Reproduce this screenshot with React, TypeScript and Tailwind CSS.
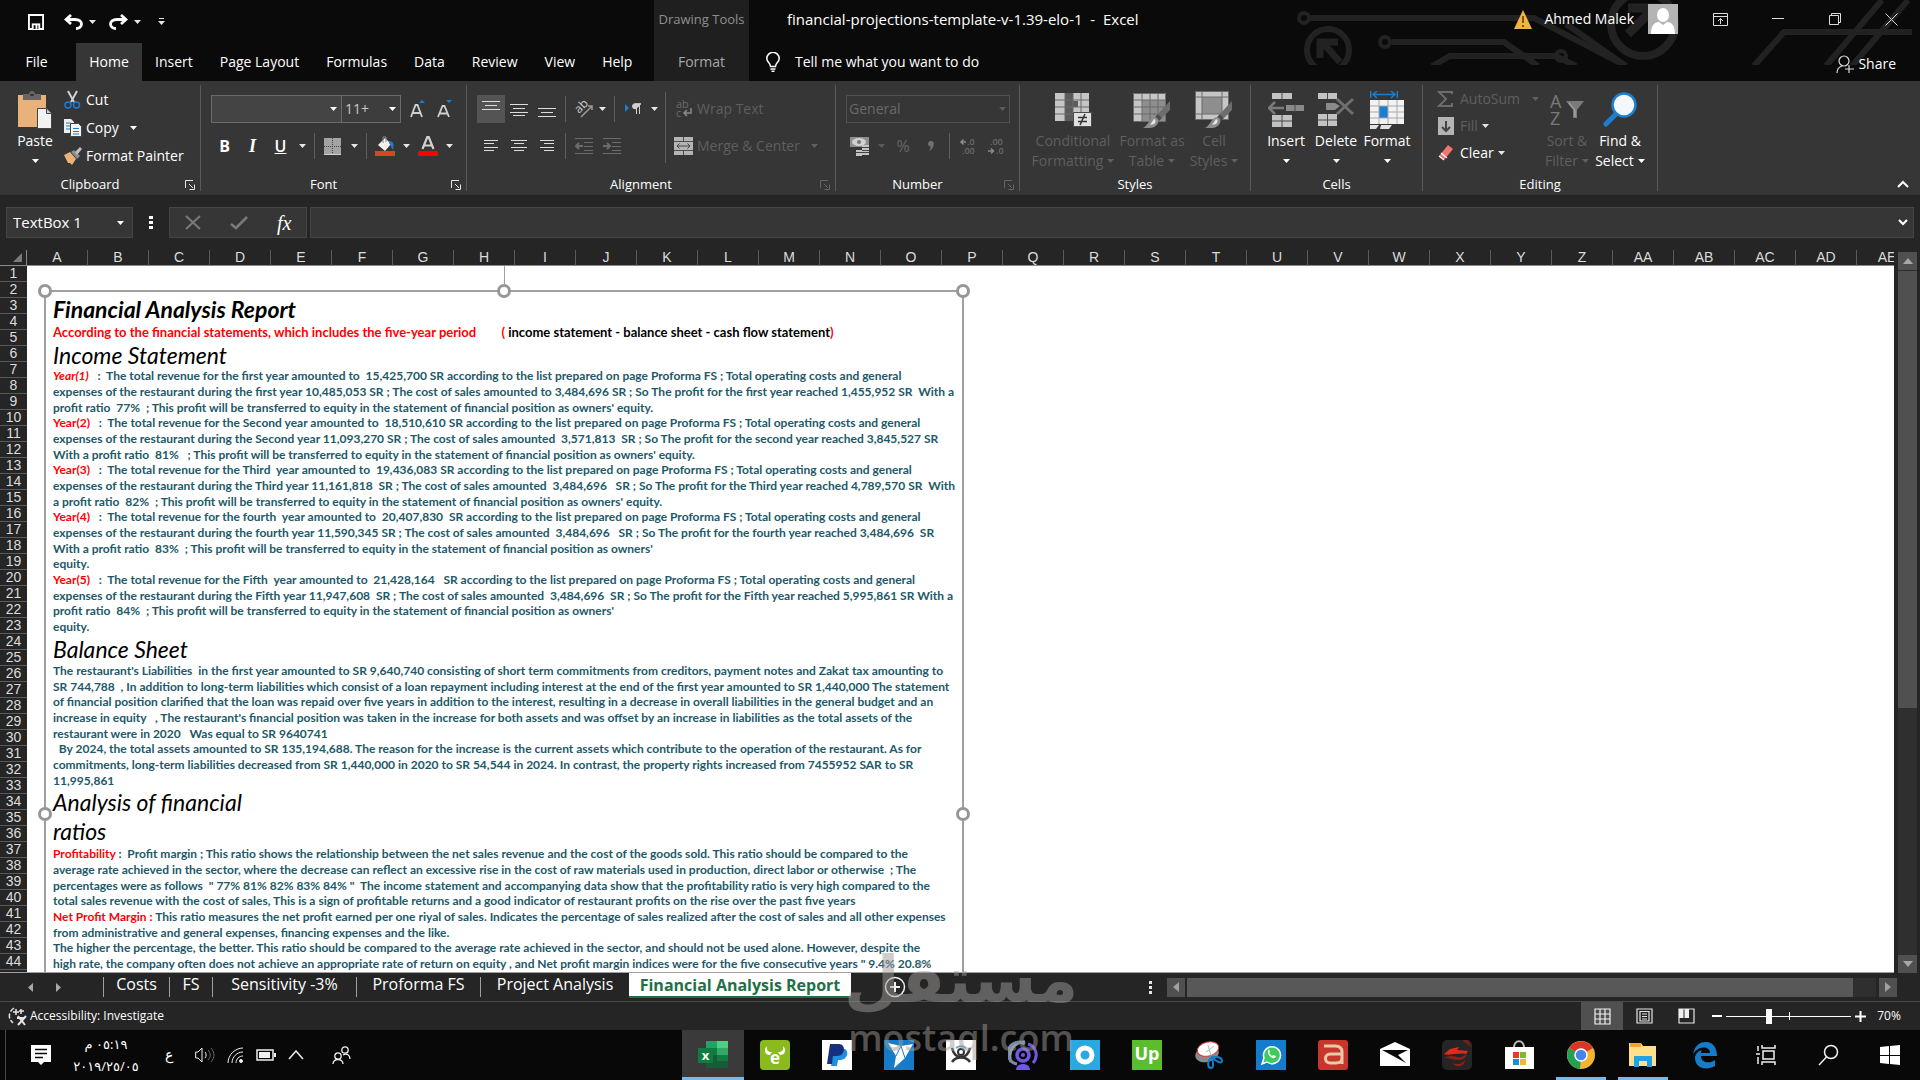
import type { ReactNode } from 'react';

const UI_FONT = 'font-["Open_Sans","DejaVu_Sans",sans-serif]';
const DOC_FONT = 'font-["Lato",sans-serif]';
const GRID_FONT = 'font-["Liberation_Sans",sans-serif]';

const COLUMNS = 'A B C D E F G H I J K L M N O P Q R S T U V W X Y Z AA AB AC AD AE'.split(' ');
const ROWS = Array.from({ length: 45 }, (_, i) => i + 1);
const TABS = ['Insert', 'Page Layout', 'Formulas', 'Data', 'Review', 'View', 'Help'];

type Line = { lead?: string; italic?: boolean; text: string };

const INCOME: Line[] = [
  { lead: 'Year(1)', italic: true, text: '   :  The total revenue for the first year amounted to  15,425,700 SR according to the list prepared on page Proforma FS ; Total operating costs and general' },
  { text: 'expenses of the restaurant during the first year 10,485,053 SR ; The cost of sales amounted to 3,484,696 SR ; So The profit for the first year reached 1,455,952 SR  With a' },
  { text: "profit ratio  77%  ; This profit will be transferred to equity in the statement of financial position as owners' equity." },
  { lead: 'Year(2)', text: '   :  The total revenue for the Second year amounted to  18,510,610 SR according to the list prepared on page Proforma FS ; Total operating costs and general' },
  { text: 'expenses of the restaurant during the Second year 11,093,270 SR ; The cost of sales amounted  3,571,813  SR ; So The profit for the second year reached 3,845,527 SR' },
  { text: "With a profit ratio  81%   ; This profit will be transferred to equity in the statement of financial position as owners' equity." },
  { lead: 'Year(3)', text: '   :  The total revenue for the Third  year amounted to  19,436,083 SR according to the list prepared on page Proforma FS ; Total operating costs and general' },
  { text: 'expenses of the restaurant during the Third year 11,161,818  SR ; The cost of sales amounted  3,484,696   SR ; So The profit for the Third year reached 4,789,570 SR  With' },
  { text: "a profit ratio  82%  ; This profit will be transferred to equity in the statement of financial position as owners' equity." },
  { lead: 'Year(4)', text: '   :  The total revenue for the fourth  year amounted to  20,407,830  SR according to the list prepared on page Proforma FS ; Total operating costs and general' },
  { text: 'expenses of the restaurant during the fourth year 11,590,345 SR ; The cost of sales amounted  3,484,696   SR ; So The profit for the fourth year reached 3,484,696  SR' },
  { text: "With a profit ratio  83%  ; This profit will be transferred to equity in the statement of financial position as owners'" },
  { text: 'equity.' },
  { lead: 'Year(5)', text: '   :  The total revenue for the Fifth  year amounted to  21,428,164   SR according to the list prepared on page Proforma FS ; Total operating costs and general' },
  { text: 'expenses of the restaurant during the Fifth year 11,947,608  SR ; The cost of sales amounted  3,484,696  SR ; So The profit for the Fifth year reached 5,995,861 SR With a' },
  { text: "profit ratio  84%  ; This profit will be transferred to equity in the statement of financial position as owners'" },
  { text: 'equity.' },
];

const BALANCE: Line[] = [
  { text: "The restaurant's Liabilities  in the first year amounted to SR 9,640,740 consisting of short term commitments from creditors, payment notes and Zakat tax amounting to" },
  { text: 'SR 744,788  , In addition to long-term liabilities which consist of a loan repayment including interest at the end of the first year amounted to SR 1,440,000 The statement' },
  { text: 'of financial position clarified that the loan was repaid over five years in addition to the interest, resulting in a decrease in overall liabilities in the general budget and an' },
  { text: "increase in equity   , The restaurant's financial position was taken in the increase for both assets and was offset by an increase in liabilities as the total assets of the" },
  { text: 'restaurant were in 2020   Was equal to SR 9640741' },
  { text: '  By 2024, the total assets amounted to SR 135,194,688. The reason for the increase is the current assets which contribute to the operation of the restaurant. As for' },
  { text: 'commitments, long-term liabilities decreased from SR 1,440,000 in 2020 to SR 54,544 in 2024. In contrast, the property rights increased from 7455952 SAR to SR' },
  { text: '11,995,861' },
];

const RATIOS: Line[] = [
  { lead: 'Profitability', text: ' :  Profit margin ; This ratio shows the relationship between the net sales revenue and the cost of the goods sold. This ratio should be compared to the' },
  { text: 'average rate achieved in the sector, where the decrease can reflect an excessive rise in the cost of raw materials used in production, direct labor or otherwise  ; The' },
  { text: 'percentages were as follows  " 77% 81% 82% 83% 84% "  The income statement and accompanying data show that the profitability ratio is very high compared to the' },
  { text: 'total sales revenue with the cost of sales, This is a sign of profitable returns and a good indicator of restaurant profits on the rise over the past five years' },
  { lead: 'Net Profit Margin :', text: ' This ratio measures the net profit earned per one riyal of sales. Indicates the percentage of sales realized after the cost of sales and all other expenses' },
  { text: 'from administrative and general expenses, financing expenses and the like.' },
  { text: 'The higher the percentage, the better. This ratio should be compared to the average rate achieved in the sector, and should not be used alone. However, despite the' },
  { text: 'high rate, the company often does not achieve an appropriate rate of return on equity , and Net profit margin indices were for the five consecutive years " 9.4% 20.8%' },
];

/* ---------- small pieces ---------- */

function Caret({ className = 'text-[#e6e6e6]' }: { className?: string }) {
  return (
    <svg width="7" height="4" viewBox="0 0 7 4" className={`inline-block shrink-0 ${className}`} aria-hidden="true">
      <path d="M0 0h7L3.5 4z" fill="currentColor" />
    </svg>
  );
}

function Tool({ label, className, children }: { label: string; className: string; children: ReactNode }) {
  return (
    <button type="button" aria-label={label} className={`flex h-7 shrink-0 items-center justify-center ${className}`}>
      {children}
    </button>
  );
}

function Sep({ className }: { className: string }) {
  return <span className={`h-[26px] w-px shrink-0 bg-[#5e5e5e] ${className}`} />;
}

function Group({ title, className, launcher, children }: { title: string; className: string; launcher?: string; children: ReactNode }) {
  return (
    <section aria-label={title} className={`my-1 flex shrink-0 flex-col border-r border-[#5a5a5a] ${className}`}>
      <div className="flex h-[92px]">{children}</div>
      <div className={`relative flex h-[14px] items-center justify-center text-[13px] leading-[14px] ${launcher ? 'pr-5' : ''}`}>
        {title}
        {launcher && (
          <button type="button" aria-label={`${title} settings`} className={`absolute right-[5px] top-[3px] ${launcher}`}>
            <svg width="10" height="10" viewBox="0 0 10 10" fill="none" stroke="currentColor">
              <path d="M.5 8V.5H8M4 4l4 4M9.5 4.5v5h-5" />
            </svg>
          </button>
        )}
      </div>
    </section>
  );
}

function BigButton({ icon, first, second, className }: { icon: ReactNode; first: string; second?: string; className: string }) {
  return (
    <button type="button" className={`flex shrink-0 flex-col items-center pt-1 text-sm leading-5 ${className}`}>
      <span className="flex h-[42px] items-center">{icon}</span>
      <span className="whitespace-nowrap">{first}</span>
      <span className="flex h-5 items-center gap-1 whitespace-nowrap">
        {second}
        <Caret className="text-current" />
      </span>
    </button>
  );
}

function AlignIcon({ lines, className = 'text-[#dcdcdc]' }: { lines: [number, number, number][]; className?: string }) {
  return (
    <svg width="18" height="18" viewBox="0 0 18 18" stroke="currentColor" className={className}>
      {lines.map(([x, w, y]) => (
        <path key={y} d={`M${x} ${y + 0.5}h${w}`} />
      ))}
    </svg>
  );
}

function IndentIcon({ out }: { out?: boolean }) {
  return (
    <svg width="18" height="18" viewBox="0 0 18 18" fill="none" stroke="currentColor" className="text-[#6b6b6b]">
      <path d="M0 1.5h18M9 5.5h9M9 9.5h9M9 13.5h9M0 16.5h18" />
      <path d={out ? 'M8 9H1m3-3L1 9l3 3' : 'M0 9h7M4 6l3 3-3 3'} strokeWidth="2" />
    </svg>
  );
}

/* ---------- title and tabs ---------- */

function Circuit() {
  return (
    <svg width="624" height="65" viewBox="0 0 624 65" fill="none" stroke="#222" strokeWidth="6" className="absolute right-0 top-0" aria-hidden="true">
      <path d="M14 18h224l92 48" />
      <circle cx="8" cy="18" r="5" strokeWidth="4" />
      <path d="M96 42h112l34 24M136 66l18-10h106l20 10" />
      <circle cx="89" cy="42" r="5" strokeWidth="4" />
      <circle cx="265" cy="56" r="5" strokeWidth="4" />
      <circle cx="32" cy="50" r="21" />
      <path d="M24 58V42h18M26 42l18 20" strokeWidth="7" />
      <path d="M270 24l60 42" />
      <circle cx="347" cy="24" r="32" strokeWidth="8" />
      <path d="M332 34l26-26M332 8h28v26" strokeWidth="9" />
      <path d="M458 66l30-34h128M530 66l56-66M556 66l56-66" />
    </svg>
  );
}

function TitleBar() {
  return (
    <div className="relative flex h-[43px] items-center">
      <div className="flex w-[654px] shrink-0 items-center pl-[28px]">
        <button type="button" aria-label="Save">
          <svg width="16" height="16" viewBox="0 0 17 17">
            <path d="M1 1h15v15H1z" fill="none" stroke="#fff" strokeWidth="2" />
            <path d="M4 10h9v6H4z" fill="#fff" />
            <path d="M6 12h2v4H6zM10 12h1v4h-1z" fill="#0a0a0a" />
          </svg>
        </button>
        <button type="button" aria-label="Undo" className="ml-5 flex items-center gap-[6px]">
          <svg width="19" height="16" viewBox="0 0 19 16" fill="none" stroke="#fff" strokeWidth="2.8">
            <path d="M7 1L2 5.500l5 4.500M2.500 5.500H11c9 0 8 9 1 9" />
          </svg>
          <Caret />
        </button>
        <button type="button" aria-label="Redo" className="ml-[13px] flex items-center gap-[6px]">
          <svg width="19" height="16" viewBox="0 0 19 16" fill="none" stroke="#fff" strokeWidth="2.8">
            <path d="M12 1l5 4.500-5 4.500M16.500 5.500H8c-9 0-8 9-1 9" />
          </svg>
          <Caret />
        </button>
        <button type="button" aria-label="Customize Quick Access Toolbar" className="ml-[17px]">
          <svg width="7" height="7" viewBox="0 0 7 7" fill="#e6e6e6">
            <path d="M1 0h5v1H1zM0 3h7L3.500 7z" />
          </svg>
        </button>
      </div>
      <div className="flex h-full w-[95px] shrink-0 items-center justify-center bg-[#1f1f1f] pb-1 text-[13px] text-[#8f8f8f]">Drawing Tools</div>
      <h1 className="ml-[38px] whitespace-pre pb-1 text-[15px]">financial-projections-template-v-1.39-elo-1  -  Excel</h1>
      <div className="ml-auto flex h-full items-center pb-[5px]">
        <svg width="18" height="19" viewBox="0 0 18 19" className="mr-3">
          <path d="M9 0l9 19H0z" fill="#f0b440" />
          <path d="M8 6h2v7H8zM8 15h2v2H8z" fill="#7a5410" />
        </svg>
        <span className="text-sm">Ahmed Malek</span>
        <svg width="30" height="30" viewBox="0 0 30 30" className="ml-[14px] mr-[14px]">
          <path d="M0 0h30v30H0z" fill="#b4b4b4" />
          <path d="M3 30c0-8 3-12 8-12l4 3 4-3c5 0 8 4 8 12z" fill="#fff" />
          <ellipse cx="15" cy="11" rx="6" ry="7" fill="#fff" />
        </svg>
        <button type="button" aria-label="Ribbon Display Options" className="flex w-[57px] justify-center">
          <svg width="15" height="13" viewBox="0 0 15 13" fill="none" stroke="#dcdcdc">
            <path d="M.5.5h14v12H.5zM.5 3.500h14M7.500 11V5.500M5 8l2.500-2.500L10 8" />
          </svg>
        </button>
        <button type="button" aria-label="Minimize" className="flex w-[57px] justify-center">
          <svg width="12" height="12" viewBox="0 0 12 12" stroke="#dcdcdc">
            <path d="M0 5.500h12" />
          </svg>
        </button>
        <button type="button" aria-label="Restore Down" className="flex w-[57px] justify-center">
          <svg width="12" height="12" viewBox="0 0 12 12" fill="none" stroke="#dcdcdc">
            <path d="M.5 2.500h9v9h-9zM2.500 2V.5h9v9H10" />
          </svg>
        </button>
        <button type="button" aria-label="Close" className="flex w-[57px] justify-center">
          <svg width="13" height="13" viewBox="0 0 13 13" stroke="#dcdcdc">
            <path d="M.5.5l12 12M12.500.5l-12 12" />
          </svg>
        </button>
      </div>
    </div>
  );
}

function RibbonTabs() {
  return (
    <nav className="relative flex h-[38px] text-sm">
      <button type="button" className="w-[76px] pr-[3px]">File</button>
      <button type="button" className="w-[66px] bg-[#363636]">Home</button>
      <div className="flex w-[512px] gap-px">
        {TABS.map(tab => (
          <button key={tab} type="button" className="whitespace-nowrap px-[13px]">{tab}</button>
        ))}
      </div>
      <button type="button" className="w-[95px] bg-[#1f1f1f] text-[#a8a8a8]">Format</button>
      <button type="button" className="ml-[17px] flex items-center gap-[15px]">
        <svg width="14" height="20" viewBox="0 0 14 20" fill="none" stroke="#fff" strokeWidth="1.500">
          <path d="M4.500 14.500c0-4-3.700-4-3.700-8a6.200 6.200 0 0112.400 0c0 4-3.700 4-3.700 8zM4.500 17h5M5.500 19.200h3" />
        </svg>
        Tell me what you want to do
      </button>
      <button type="button" className="ml-auto mr-6 flex items-center gap-1 pt-1">
        <svg width="18" height="19" viewBox="0 0 18 19" fill="none" stroke="#dcdcdc" strokeWidth="1.200">
          <circle cx="8" cy="6" r="5" />
          <path d="M1 18c0-4 2-6 5-7M13 10v8M9 14h9" />
        </svg>
        Share
      </button>
    </nav>
  );
}

/* ---------- ribbon ---------- */

const PasteIcon = (
  <svg width="34" height="38" viewBox="0 0 34 38">
    <path d="M0 4h28v32H0z" fill="#e8b27a" />
    <path d="M5 3h6c0-4 6-4 6 0h6v6H5z" fill="#666" />
    <path d="M12 3h4v2h-4z" fill="#363636" />
    <path d="M19.500 17.500h9l5 5v15h-14z" fill="#f2f2f2" stroke="#444" />
    <path d="M28.500 17.500v5h5" fill="#ccc" stroke="#444" />
  </svg>
);

const ConditionalIcon = (
  <svg width="37" height="34" viewBox="0 0 37 34">
    <path d="M0 0h34v28H0z" fill="#c6c6c6" />
    <path d="M10 0h8v28h-8zM18 8h5v6h-5z" fill="#5b5b5b" />
    <path d="M0 7h34M0 14h34M0 21h34M10 0v28M18 0v28M26 0v28" stroke="#6b6b6b" />
    <path d="M18.500 19.500h18v14h-18z" fill="#e0e0e0" stroke="#4a4a4a" />
    <path d="M23 24.500h9M23 28.500h9M30 21l-5 11" stroke="#333" strokeWidth="1.500" />
  </svg>
);

function Brush() {
  return (
    <>
      <path d="M37 8v9l-8 8-4-4z" fill="#6d6d6d" />
      <path d="M25 21l4 4-3 3-4-4z" fill="#4c4c4c" />
      <path d="M22 24c3 1 4 3 3 6-3 6-9 5-15 5 5-2 6-10 12-11z" fill="#8d8d8d" />
      <path d="M21 26c2 0 2 3 0 5l-4 1z" fill="#e6e6e6" />
    </>
  );
}

const TableIcon = (
  <svg width="38" height="35" viewBox="0 0 38 35">
    <path d="M0 0h33v28H0z" fill="#c6c6c6" />
    <path d="M9 7h24v21H9z" fill="#8e8e8e" />
    <path d="M0 7h33M0 14h33M0 21h33M9 0v28M17 0v28M25 0v28M.5.5h32v28H.5z" stroke="#6b6b6b" fill="none" />
    <Brush />
  </svg>
);

const CellStylesIcon = (
  <svg width="38" height="38" viewBox="0 0 38 38">
    <path d="M.5.500h33v28H.5z" fill="#c6c6c6" stroke="#6b6b6b" />
    <path d="M7 6h20v17H7z" fill="#8e8e8e" />
    <path d="M0 6h34M0 23h34M7 0v29M27 0v29" stroke="#6b6b6b" />
    <g transform="translate(0 2)"><Brush /></g>
  </svg>
);

const InsertIcon = (
  <svg width="36" height="36" viewBox="0 0 36 36">
    <path d="M4 1h20v6H4zM4 23h20v12H4z" fill="#c2c2c2" />
    <path d="M18 13h18v6H18z" fill="#8a8a8a" />
    <path d="M14 0v7M27 12v8M14 23v12M4 29h20" stroke="#484848" />
    <path d="M16 16H2M7 10l-6 6 6 6" stroke="#7b7b7b" strokeWidth="2.500" fill="none" />
  </svg>
);

const DeleteIcon = (
  <svg width="36" height="36" viewBox="0 0 36 36">
    <path d="M0 1h19v6H0zM0 22h19v12H0z" fill="#c2c2c2" />
    <path d="M8 11h9l5 3-5 4H8z" fill="#8a8a8a" />
    <path d="M9.500 1v6M9.500 22v12M0 28h19" stroke="#484848" />
    <path d="M19 7l16 15M35 7L19 22" stroke="#6f6f6f" strokeWidth="3" />
  </svg>
);

const FormatIcon = (
  <svg width="34" height="38" viewBox="0 0 34 38">
    <path d="M.7 0v7M27.300 0v7M3 3.500h22M7 0L3 3.500 7 7M21 0l4 3.500L21 7" stroke="#1b7fd1" strokeWidth="1.500" fill="none" />
    <path d="M0 9h34v24H0z" fill="#f2f2f2" />
    <path d="M9 15h9v12H9z" fill="#1b7fd1" />
    <path d="M0 15h34M0 21h9M18 21h16M0 27h34M9 9v24M18 9v24M27 9v24" stroke="#a9a9a9" />
    <path d="M0 34h9l-3 4H0zM11 34h11l-3 4h-9z" fill="#e2e2e2" />
  </svg>
);

const SortIcon = (
  <svg width="34" height="34" viewBox="0 0 34 34" className="overflow-visible">
    <text x="0" y="15" fontSize="18" fill="#7a7a7a">A</text>
    <text x="0" y="32" fontSize="18" fill="#7a7a7a">Z</text>
    <path d="M16 8h18l-7 9v8h-4v-8z" fill="#7a7a7a" />
    <path d="M19 10l6 7v7" stroke="#b5b5b5" fill="none" />
  </svg>
);

const FindIcon = (
  <svg width="35" height="36" viewBox="0 0 35 36">
    <path d="M12 23L3 32" stroke="#1b7fd1" strokeWidth="5" strokeLinecap="round" />
    <circle cx="21" cy="13" r="11.500" fill="#f4f8fb" stroke="#1b7fd1" strokeWidth="2.500" />
  </svg>
);

function Ribbon() {
  return (
    <div className="relative flex bg-[#363636]">
      <Group title="Clipboard" className="w-[201px]" launcher="text-[#e6e6e6]">
        <BigButton icon={PasteIcon} first="Paste" className="ml-[10px] w-[50px]" />
        <div className="ml-[3px] flex flex-col pt-px text-sm">
          <button type="button" className="flex h-7 items-center gap-[3px]">
            <svg width="20" height="20" viewBox="0 0 20 20" fill="none">
              <path d="M5 1l6 11M14 1L8 12" stroke="#cfcfcf" strokeWidth="2" />
              <circle cx="5" cy="15" r="3" stroke="#1b7fd1" strokeWidth="1.500" />
              <circle cx="13.500" cy="15" r="3" stroke="#1b7fd1" strokeWidth="1.500" />
            </svg>
            Cut
          </button>
          <button type="button" className="flex h-7 items-center gap-[3px]">
            <svg width="20" height="20" viewBox="0 0 20 20">
              <path d="M1 1h7l3 3v11H1z" fill="#eee" />
              <path d="M3 5h5M3 8h6M3 11h4" stroke="#1b7fd1" />
              <path d="M7.500 5.500h8l3 3v10h-11z" fill="#f4f4f4" stroke="#444" />
              <path d="M10 10.500h6M10 13.500h6M10 16h6" stroke="#1b7fd1" />
            </svg>
            Copy
            <Caret className="ml-2" />
          </button>
          <button type="button" className="flex h-7 items-center gap-[3px] whitespace-nowrap">
            <svg width="20" height="18" viewBox="0 0 20 18">
              <path d="M1 8l6-3 6 7-4 6-2-2-2 0z" fill="#e8b27a" />
              <path d="M8 5l3-2 6 6-3 3z" fill="#8d8d8d" />
              <path d="M12 5l5-5 2 2-5 6z" fill="#bdbdbd" />
            </svg>
            Format Painter
          </button>
        </div>
      </Group>

      <Group title="Font" className="w-[266px]" launcher="text-[#e6e6e6]">
        <div className="flex flex-col gap-[9px] pl-[10px] pt-[10px]">
          <div className="flex items-center">
            <div className="relative">
              <select aria-label="Font name" className="h-7 w-[131px] appearance-none border border-[#6a6a6a] bg-[#444] px-1 text-sm">
                <option> </option>
              </select>
              <Caret className="absolute right-[5px] top-3" />
            </div>
            <div className="relative">
              <select aria-label="Font size" defaultValue="11+" className="h-7 w-[59px] appearance-none border border-l-0 border-[#6a6a6a] bg-[#3d3d3d] px-[3px] text-sm text-[#c8c8c8]">
                <option>11+</option>
              </select>
              <Caret className="absolute right-[5px] top-3" />
            </div>
            <Tool label="Increase Font Size" className="ml-[2px] w-[30px]">
              <svg width="16" height="18" viewBox="0 0 16 18">
                <path d="M1 17L5.500 5h2L12 17M3 13h7" fill="none" stroke="#cfcfcf" strokeWidth="1.800" />
                <path d="M9 3l3-3 3 3z" fill="#1b7fd1" />
              </svg>
            </Tool>
            <Tool label="Decrease Font Size" className="w-6">
              <svg width="16" height="18" viewBox="0 0 16 18">
                <path d="M1 17L5.500 6h2L12 17M3 13.500h7" fill="none" stroke="#cfcfcf" strokeWidth="1.800" />
                <path d="M9 0h6l-3 3z" fill="#1b7fd1" />
              </svg>
            </Tool>
          </div>
          <div className="flex h-7 items-center">
            <Tool label="Bold" className="w-[27px] text-base font-bold">B</Tool>
            <Tool label="Italic" className="w-[29px] font-['Liberation_Serif',serif] text-lg font-bold italic">I</Tool>
            <Tool label="Underline" className="w-[27px] text-base font-semibold underline">U</Tool>
            <Tool label="Underline options" className="w-4"><Caret /></Tool>
            <Sep className="mx-1" />
            <Tool label="Borders" className="w-[26px]">
              <svg width="17" height="17" viewBox="0 0 17 17">
                <path d="M0 0h17v17H0z" fill="#a3a3a3" />
                <path d="M8.500 0v17M0 8.500h17" stroke="#444" strokeDasharray="1 1" />
                <path d="M0 16.500h17" stroke="#d0d0d0" />
              </svg>
            </Tool>
            <Tool label="Border options" className="w-[18px]"><Caret /></Tool>
            <Sep className="mx-[3px]" />
            <Tool label="Fill Color" className="w-[29px]">
              <svg width="20" height="20" viewBox="0 0 20 20">
                <path d="M3 9l7-7 6 6-6 7z" fill="#f2f2f2" />
                <path d="M8 7V1h3v5" stroke="#8a8a8a" fill="none" />
                <path d="M14 5c5 0 5 4 4 9-2-2-2-5-4-7z" fill="#1b7fd1" />
                <path d="M0 15h20v5H0z" fill="#d24726" />
              </svg>
            </Tool>
            <Tool label="Fill Color options" className="w-[14px]"><Caret /></Tool>
            <Tool label="Font Color" className="w-[30px]">
              <svg width="20" height="20" viewBox="0 0 20 20">
                <path d="M4.500 13L9.300 1h1.400l4.800 12M6.500 9.500h7" fill="none" stroke="#d6cfcf" strokeWidth="2.200" />
                <path d="M0 15h20v5H0z" fill="#f00" />
              </svg>
            </Tool>
            <Tool label="Font Color options" className="w-3"><Caret /></Tool>
          </div>
        </div>
      </Group>

      <Group title="Alignment" className="w-[369px]" launcher="text-[#666]">
        <div className="flex flex-col gap-[9px] pl-[10px] pt-[10px]">
          <div className="flex h-7 items-center">
            <Tool label="Top Align" className="w-7 bg-[#545454]"><AlignIcon lines={[[0, 18, 1], [3, 12, 5], [0, 18, 9]]} /></Tool>
            <Tool label="Middle Align" className="w-7"><AlignIcon lines={[[0, 18, 4], [3, 12, 8], [0, 18, 12], [3, 12, 15]]} /></Tool>
            <Tool label="Bottom Align" className="w-7"><AlignIcon lines={[[0, 18, 8], [3, 12, 12], [0, 18, 16]]} /></Tool>
            <Sep className="mx-1" />
            <Tool label="Orientation" className="w-7">
              <svg width="20" height="18" viewBox="0 0 20 18" className="overflow-visible">
                <text x="0" y="0" fontSize="12" fill="#cfcfcf" transform="translate(5 14) rotate(-45)">ab</text>
                <path d="M7 17L18 6M14 6h4v4" stroke="#9a9a9a" fill="none" strokeWidth="1.500" />
              </svg>
            </Tool>
            <Tool label="Orientation options" className="w-2"><Caret /></Tool>
            <Sep className="mx-2" />
            <Tool label="Text Direction" className="w-5">
              <svg width="16" height="12" viewBox="0 0 16 12">
                <path d="M0 1l4 4-4 4z" fill="#1b7fd1" />
                <path d="M11.500 11V.7M14.500 11V.7M16 .7h-6a2.500 2.500 0 000 5h1z" stroke="#cfcfcf" fill="#cfcfcf" />
              </svg>
            </Tool>
            <Tool label="Text Direction options" className="w-[22px]"><Caret /></Tool>
          </div>
          <div className="flex h-7 items-center">
            <Tool label="Align Left" className="w-7"><AlignIcon lines={[[2, 14, 3], [2, 10, 6], [2, 14, 10], [2, 10, 13]]} /></Tool>
            <Tool label="Center" className="w-7"><AlignIcon lines={[[1, 16, 3], [4, 10, 6], [1, 16, 10], [4, 10, 13]]} /></Tool>
            <Tool label="Align Right" className="w-7"><AlignIcon lines={[[2, 14, 3], [6, 10, 6], [2, 14, 10], [6, 10, 13]]} /></Tool>
            <Sep className="mx-1" />
            <Tool label="Decrease Indent" className="w-7"><IndentIcon out /></Tool>
            <Tool label="Increase Indent" className="w-7"><IndentIcon /></Tool>
          </div>
        </div>
        <span className="mt-[7px] h-[71px] w-px bg-[#5e5e5e]" />
        <div className="flex flex-col gap-[9px] pl-2 pt-[10px] text-sm text-[#5f5f5f]">
          <button type="button" className="flex h-7 items-center gap-[3px] whitespace-nowrap">
            <svg width="20" height="18" viewBox="0 0 20 18" className="overflow-visible">
              <text x="2" y="8" fontSize="11" fill="#6b6b6b">ab</text>
              <text x="2" y="17" fontSize="11" fill="#6b6b6b">c</text>
              <path d="M17 8v5h-7M13 10l-3 3 3 3" stroke="#8a8a8a" strokeWidth="1.500" fill="none" />
            </svg>
            Wrap Text
          </button>
          <button type="button" className="flex h-7 items-center gap-[3px] whitespace-nowrap">
            <svg width="20" height="18" viewBox="0 0 20 18">
              <path d="M0 0h19v18H0z" fill="#b4b4b4" />
              <path d="M0 4.500h19M0 13.500h19M9.500 0v4M9.500 14v4" stroke="#4d4d4d" />
              <path d="M3 9h13M5.500 6.500L3 9l2.500 2.500M13.500 6.500L16 9l-2.500 2.500" stroke="#444" fill="none" />
            </svg>
            Merge &amp; Center
            <Caret className="ml-2" />
          </button>
        </div>
      </Group>

      <Group title="Number" className="w-[184px]" launcher="text-[#666]">
        <div className="flex flex-col gap-[9px] pl-[10px] pt-[10px]">
          <div className="relative">
            <select aria-label="Number format" defaultValue="General" className="h-7 w-[164px] appearance-none border border-[#515151] px-[2px] text-sm text-[#6a6a6a]">
              <option>General</option>
            </select>
            <Caret className="absolute right-1 top-3 text-[#5a5a5a]" />
          </div>
          <div className="flex h-7 items-center text-[#666]">
            <Tool label="Accounting Number Format" className="w-[27px]">
              <svg width="20" height="20" viewBox="0 0 20 20">
                <path d="M0 1h19v10H0z" fill="#8e8e8e" />
                <ellipse cx="9" cy="6" rx="7" ry="4" fill="#d0d0d0" />
                <circle cx="9" cy="6" r="2" fill="#777" />
                <path d="M12 9h7v10h-7zM6 14h6v6H6z" fill="#c4c4c4" />
                <path d="M12 11.500h7M12 14.500h7M6 16.500h13" stroke="#444" />
              </svg>
            </Tool>
            <Tool label="Accounting options" className="w-4"><Caret className="text-[#5a5a5a]" /></Tool>
            <Tool label="Percent Style" className="w-7 text-base">%</Tool>
            <Tool label="Comma Style" className="w-7">
              <svg width="6" height="10" viewBox="0 0 6 10" fill="#707070">
                <path d="M3 0a2.500 2.500 0 012.700 3C5.700 6 4 9 1 10c1-1.500 1.700-3 1.500-4.600A2.600 2.600 0 013 0z" />
              </svg>
            </Tool>
            <Sep className="mx-1" />
            <Tool label="Increase Decimal" className="w-7">
              <svg width="16" height="18" viewBox="0 0 16 18" className="overflow-visible font-semibold" fill="#6b6b6b">
                <path d="M1 5h5M3.500 2.500L1 5l2.500 2.500" stroke="#8a8a8a" strokeWidth="1.500" fill="none" />
                <text x="7" y="8" fontSize="9">.0</text>
                <text x="2" y="17" fontSize="9">.00</text>
              </svg>
            </Tool>
            <Tool label="Decrease Decimal" className="w-7">
              <svg width="16" height="18" viewBox="0 0 16 18" className="overflow-visible font-semibold" fill="#6b6b6b">
                <text x="2" y="8" fontSize="9">.00</text>
                <path d="M0 14h5M3 11.500L5.500 14 3 16.500" stroke="#8a8a8a" strokeWidth="1.500" fill="none" />
                <text x="8" y="17" fontSize="9">.0</text>
              </svg>
            </Tool>
          </div>
        </div>
      </Group>

      <Group title="Styles" className="w-[231px]">
        <div className="flex pl-[10px] text-[#5f5f5f]">
          <BigButton icon={ConditionalIcon} first="Conditional" second="Formatting" className="w-[86px]" />
          <BigButton icon={TableIcon} first="Format as" second="Table" className="w-[72px]" />
          <BigButton icon={CellStylesIcon} first="Cell" second="Styles" className="w-[52px]" />
        </div>
      </Group>

      <Group title="Cells" className="w-[172px]">
        <div className="flex pl-[11px]">
          <BigButton icon={InsertIcon} first="Insert" className="w-12" />
          <BigButton icon={DeleteIcon} first="Delete" className="w-[52px]" />
          <BigButton icon={FormatIcon} first="Format" className="w-[50px]" />
        </div>
      </Group>

      <Group title="Editing" className="w-[235px]">
        <div className="flex w-[119px] flex-col pl-[13px] text-sm text-[#5f5f5f]">
          <button type="button" className="flex h-[27px] items-center gap-1">
            <svg width="20" height="18" viewBox="0 0 20 18">
              <path d="M16 4V2H3l7 7-7 7h13v-3" fill="none" stroke="#6b6b6b" strokeWidth="2" />
            </svg>
            AutoSum
            <Caret className="ml-2" />
          </button>
          <button type="button" className="flex h-[27px] items-center gap-1">
            <svg width="20" height="18" viewBox="0 0 20 18">
              <path d="M2 0h16v18H2z" fill="#b4b4b4" />
              <path d="M10 4v10M6 10l4 4 4-4" fill="none" stroke="#444" strokeWidth="2" />
            </svg>
            Fill
            <Caret />
          </button>
          <button type="button" className="flex h-[27px] items-center gap-1 text-white">
            <svg width="20" height="18" viewBox="0 0 20 18">
              <path d="M12 1l5 4-9 11-5-4z" fill="#f0766f" />
              <path d="M5 9l6 5M3 12l5 4" stroke="#fff" strokeWidth="1.200" />
            </svg>
            Clear
            <Caret />
          </button>
        </div>
        <BigButton icon={SortIcon} first="Sort &" second="Filter" className="w-[50px] text-[#5f5f5f]" />
        <BigButton icon={FindIcon} first="Find &" second="Select" className="w-[56px]" />
      </Group>

      <button type="button" aria-label="Collapse the Ribbon" className="ml-auto mr-[11px] mt-[99px] h-2">
        <svg width="12" height="8" viewBox="0 0 12 8" fill="none" stroke="#fff" strokeWidth="2">
          <path d="M1 7l5-5 5 5" />
        </svg>
      </button>
    </div>
  );
}

function FormulaBar() {
  return (
    <div className="flex items-center bg-[#252525] pb-3 pl-[6px] pr-[6px] pt-3">
      <div className="relative">
        <select aria-label="Name Box" defaultValue="TextBox 1" className="h-[31px] w-[127px] appearance-none border border-[#454545] bg-[#363636] px-[6px] text-[15px]">
          <option>TextBox 1</option>
        </select>
        <Caret className="absolute right-[9px] top-[14px] text-white" />
      </div>
      <svg width="4" height="14" viewBox="0 0 4 14" fill="#fff" className="mx-4">
        <path d="M0 0h4v3H0zM0 5h4v3H0zM0 10h4v3H0z" />
      </svg>
      <div className="flex h-[31px] w-[138px] items-center justify-around border border-[#454545] bg-[#363636]">
        <button type="button" aria-label="Cancel">
          <svg width="16" height="15" viewBox="0 0 16 15" stroke="#7a7a7a" strokeWidth="2">
            <path d="M1 1l14 13M15 1L1 14" />
          </svg>
        </button>
        <button type="button" aria-label="Enter">
          <svg width="18" height="14" viewBox="0 0 18 14" fill="none" stroke="#7a7a7a" strokeWidth="2.500">
            <path d="M1 8l5 4L17 1" />
          </svg>
        </button>
        <button type="button" aria-label="Insert Function" className="font-['Liberation_Serif',serif] text-xl italic leading-5">fx</button>
      </div>
      <div className="relative ml-[3px] flex-1">
        <input aria-label="Formula" type="text" className="h-[31px] w-full border border-[#454545] bg-[#363636] px-2 text-[15px]" />
        <button type="button" aria-label="Expand Formula Bar" className="absolute right-[6px] top-3">
          <svg width="10" height="7" viewBox="0 0 10 7" fill="none" stroke="#fff" strokeWidth="2.200">
            <path d="M1 1l4 4 4-4" />
          </svg>
        </button>
      </div>
    </div>
  );
}

/* ---------- sheet ---------- */

// Text rows are 47px per three lines, so every third one is a pixel shorter.
function Lines({ lines, shift = 0 }: { lines: Line[]; shift?: number }) {
  return (
    <div className="text-xs font-bold leading-4 text-[#215968]">
      {lines.map((line, i) => (
        <p key={i} className={(i + shift) % 3 === 2 ? 'h-[15px]' : 'h-4'}>
          {line.lead && <span className={line.italic ? 'italic text-[#f00]' : 'text-[#f00]'}>{line.lead}</span>}
          {line.text}
        </p>
      ))}
    </div>
  );
}

function Handle({ className }: { className: string }) {
  return <span className={`absolute size-[14px] rounded-full border-[3px] border-[#969696] bg-white ${className}`} />;
}

function ReportBox() {
  return (
    <article className={`absolute left-[17px] top-[24px] h-[1049px] w-[920px] whitespace-pre border-2 border-[#a0a0a0] pl-[7px] pt-[5px] text-black ${DOC_FONT}`}>
      <span className="absolute -top-[26px] left-[458px] h-6 w-px bg-[#a0a0a0]" />
      <Handle className="-left-2 -top-2" />
      <Handle className="-top-2 left-[451px]" />
      <Handle className="-right-2 -top-2" />
      <Handle className="-left-2 top-[515px]" />
      <Handle className="-right-2 top-[515px]" />
      <h2 className="h-[25px] text-[23px] font-bold italic leading-[25px]">Financial Analysis Report</h2>
      <p className="h-5 text-[13px] font-bold leading-5">
        <span className="text-[#f00]">According to the financial statements, which includes the five-year period        ( </span>
        income statement - balance sheet - cash flow statement
        <span className="text-[#f00]">)</span>
      </p>
      <h3 className="h-[26px] text-[23px] italic leading-[26px]">Income Statement</h3>
      <Lines lines={INCOME} />
      <h3 className="h-7 text-[23px] italic leading-7">Balance Sheet</h3>
      <Lines lines={BALANCE} shift={1} />
      <h3 className="h-[58px] text-[23px] italic leading-[29px]">{'Analysis of financial\nratios'}</h3>
      <Lines lines={RATIOS} />
    </article>
  );
}

function Sheet() {
  return (
    <div className="flex min-h-0 flex-1 bg-[#252525]">
      <div className={`min-w-0 flex-1 overflow-hidden border-b border-[#a0a0a0] ${GRID_FONT}`}>
        <table className="w-[1918px] table-fixed border-separate border-spacing-0">
          <thead>
            <tr className="h-4 text-sm leading-[15px] text-[#dcdcdc]">
              <th className="w-[27px] border-b border-r border-[#8a8a8a] p-0">
                <svg width="9" height="9" viewBox="0 0 9 9" className="ml-auto mr-1" aria-hidden="true">
                  <path d="M9 0v9H0z" fill="#7a7a7a" />
                </svg>
              </th>
              {COLUMNS.map(col => (
                <th key={col} scope="col" className="w-[61px] border-b border-r border-b-[#8a8a8a] border-r-[#5a5a5a] p-0 font-normal">{col}</th>
              ))}
            </tr>
          </thead>
          <tbody>
            {ROWS.map(row => (
              <tr key={row} className="h-4">
                <th scope="row" className="border-b border-[#5a5a5a] p-0 text-[14px] font-normal leading-[15px] text-[#dcdcdc]">{row}</th>
                {row === 1 && (
                  <td rowSpan={ROWS.length} colSpan={COLUMNS.length} className="relative bg-white p-0">
                    <ReportBox />
                  </td>
                )}
              </tr>
            ))}
          </tbody>
        </table>
      </div>
      <div className="ml-1 mr-[3px] mt-[2px] flex w-[19px] flex-col bg-[#2f2f2f] text-[#a8a8a8]">
        <button type="button" aria-label="Scroll up" className="flex h-[18px] items-center justify-center bg-[#505050]">
          <svg width="10" height="6" viewBox="0 0 10 6"><path d="M5 0l5 6H0z" fill="currentColor" /></svg>
        </button>
        <div className="flex flex-1 flex-col py-px">
          <span className="h-[64%] bg-[#505050]" />
        </div>
        <button type="button" aria-label="Scroll down" className="flex h-[18px] items-center justify-center bg-[#505050]">
          <svg width="10" height="6" viewBox="0 0 10 6"><path d="M0 0h10L5 6z" fill="currentColor" /></svg>
        </button>
      </div>
    </div>
  );
}

function SheetTab({ name, className }: { name: string; className: string }) {
  return (
    <button type="button" className={`mt-1 h-5 shrink-0 whitespace-nowrap border-l border-[#a0a0a0] text-base leading-[14px] ${className}`}>
      <span className="block h-5 leading-[14px]">{name}</span>
    </button>
  );
}

function SheetTabs() {
  return (
    <div className="flex h-[29px] border-b border-[#4a4a4a] bg-[#252525]">
      <div className="flex w-[103px] shrink-0 items-center gap-[23px] pl-[28px] text-[#a8a8a8]">
        <button type="button" aria-label="Previous sheet">
          <svg width="5" height="9" viewBox="0 0 5 9"><path d="M5 0v9L0 4.500z" fill="currentColor" /></svg>
        </button>
        <button type="button" aria-label="Next sheet">
          <svg width="5" height="9" viewBox="0 0 5 9"><path d="M0 0v9l5-4.500z" fill="currentColor" /></svg>
        </button>
      </div>
      <SheetTab name="Costs" className="w-[66px]" />
      <SheetTab name="FS" className="w-[43px]" />
      <SheetTab name="Sensitivity -3%" className="w-[144px]" />
      <SheetTab name="Proforma FS" className="w-[124px]" />
      <SheetTab name="Project Analysis" className="w-[149px]" />
      <button type="button" className="h-[25px] w-[222px] shrink-0 whitespace-nowrap border-b-2 border-[#1e7145] bg-white text-base font-bold leading-5 text-[#1e7145]">
        Financial Analysis Report
      </button>
      <button type="button" aria-label="New sheet" className="ml-[33px]">
        <svg width="22" height="22" viewBox="0 0 22 22" fill="none" stroke="#f0f0f0">
          <circle cx="11" cy="11" r="9.500" strokeWidth="1.500" />
          <path d="M11 6v10M6 11h10" strokeWidth="2" />
        </svg>
      </button>
      <div className="ml-auto flex items-center pr-[23px]">
        <svg width="3" height="13" viewBox="0 0 3 13" fill="#e6e6e6" className="mr-[15px]">
          <path d="M0 0h3v3H0zM0 5h3v3H0zM0 10h3v3H0z" />
        </svg>
        <button type="button" aria-label="Scroll left" className="flex h-[19px] w-[18px] items-center justify-center bg-[#505050] text-[#a0a0a0]">
          <svg width="6" height="10" viewBox="0 0 6 10"><path d="M6 0v10L0 5z" fill="currentColor" /></svg>
        </button>
        <div className="ml-[2px] flex h-[19px] w-[689px] bg-[#2f2f2f]">
          <span className="w-[666px] bg-[#585858]" />
        </div>
        <button type="button" aria-label="Scroll right" className="ml-[3px] flex h-[19px] w-[18px] items-center justify-center bg-[#505050] text-[#a0a0a0]">
          <svg width="6" height="10" viewBox="0 0 6 10"><path d="M0 0v10l6-5z" fill="currentColor" /></svg>
        </button>
      </div>
    </div>
  );
}

function StatusBar() {
  return (
    <div className="flex h-7 items-center bg-[#252525] text-xs">
      <button type="button" className="flex items-center gap-[3px] pl-2">
        <svg width="19" height="19" viewBox="0 0 19 19" fill="none" stroke="#e6e6e6" strokeWidth="1.500">
          <path d="M6 1C0 5 0 12 5 16" strokeDasharray="5 2" />
          <path d="M8 2v6M5 5h6M13 2v5M11 4h5" />
          <path d="M10 9l7 9M18 9l-8 9M9 11h8" strokeWidth="2" />
        </svg>
        Accessibility: Investigate
      </button>
      <div className="ml-auto flex h-full items-center">
        <button type="button" aria-label="Normal" className="flex h-full w-[42px] items-center justify-center bg-[#505050]">
          <svg width="17" height="17" viewBox="0 0 17 17" fill="none" stroke="#f0f0f0" strokeWidth="1.200">
            <path d="M1 1h15v15H1zM1 6h15M1 11h15M6 1v15M11 1v15" />
          </svg>
        </button>
        <button type="button" aria-label="Page Layout" className="flex w-[42px] justify-center">
          <svg width="17" height="16" viewBox="0 0 17 16" fill="none" stroke="#e6e6e6" strokeWidth="1.200">
            <path d="M1 1h15v14H1zM4 3.500h9v9.500H4zM6 6h5M6 8.500h5M6 11h5" />
          </svg>
        </button>
        <button type="button" aria-label="Page Break Preview" className="flex w-[42px] justify-center">
          <svg width="17" height="16" viewBox="0 0 17 16">
            <path d="M1 1h15v14H1z" fill="none" stroke="#e6e6e6" strokeWidth="1.200" />
            <path d="M1 1h4.500v9H1zM6.500 1H11v9H6.500z" fill="#f0f0f0" />
          </svg>
        </button>
        <button type="button" aria-label="Zoom out" className="ml-[5px] mr-1 flex h-4 w-[10px] items-center">
          <span className="h-[2px] w-full bg-white" />
        </button>
        <div className="relative flex items-center">
          <input
            type="range"
            aria-label="Zoom"
            defaultValue={34}
            className="h-4 w-[125px] appearance-none bg-transparent [&::-webkit-slider-runnable-track]:h-px [&::-webkit-slider-runnable-track]:bg-white [&::-webkit-slider-thumb]:mt-[-7px] [&::-webkit-slider-thumb]:h-[15px] [&::-webkit-slider-thumb]:w-[6px] [&::-webkit-slider-thumb]:appearance-none [&::-webkit-slider-thumb]:bg-white"
          />
          <span className="absolute left-1/2 top-1 h-[8px] w-px bg-white" />
        </div>
        <button type="button" aria-label="Zoom in" className="ml-1">
          <svg width="11" height="11" viewBox="0 0 11 11" stroke="#fff" strokeWidth="2">
            <path d="M5.500 0v11M0 5.500h11" />
          </svg>
        </button>
        <span className="w-[54px] pr-2 text-center">70%</span>
      </div>
    </div>
  );
}

/* ---------- taskbar ---------- */

const APPS: { name: string; open?: boolean; active?: boolean; icon: ReactNode }[] = [
  {
    name: 'Excel',
    open: true,
    active: true,
    icon: (
      <>
        <path d="M8 1h11v7H8z" fill="#21a366" />
        <path d="M19 1h11v7H19z" fill="#4fce86" />
        <path d="M8 8h11v7H8z" fill="#107c41" />
        <path d="M19 8h11v7H19z" fill="#33a867" />
        <path d="M8 15h22v13H8z" fill="#185c37" />
        <path d="M19 15h11v6H19z" fill="#107c41" />
        <path d="M0 8h15v15H0z" fill="#107c41" />
        <text x="7.500" y="20" fontSize="13" fontWeight="700" fill="#fff" textAnchor="middle">x</text>
      </>
    ),
  },
  {
    name: 'Employee portal',
    icon: (
      <>
        <rect width="30" height="30" rx="4" fill="#8aba1c" />
        <path d="M7 6c-4 4-2 9 3 9l2-3c-4 0-6-2-5-6zM23 6c4 4 2 9-3 9l-2-3c4 0 6-2 5-6z" fill="#fff" />
        <text x="15" y="24" fontSize="17" fontWeight="700" fill="#fff" textAnchor="middle">e</text>
      </>
    ),
  },
  {
    name: 'PayPal',
    icon: (
      <>
        <path d="M0 0h30v30H0z" fill="#fff" />
        <path d="M12 9h11c4 2 3 10-4 11h-3l-1 6H9z" fill="#1f8fe0" />
        <path d="M8 4h9c7 0 7 12-2 12h-4l-1 8H5z" fill="#15307d" />
      </>
    ),
  },
  {
    name: 'Freelancer',
    icon: (
      <>
        <path d="M0 0h30v30H0z" fill="#147ccb" />
        <path d="M4 3l13 3 12-2-8 14-11 10 2-12z" fill="#fff" />
        <path d="M12 16l5-10 4 12" stroke="#147ccb" fill="none" />
      </>
    ),
  },
  {
    name: 'Khamsat',
    icon: (
      <>
        <path d="M0 0h30v30H0z" fill="#fff" />
        <path d="M6 8c2 8 6 9 9 9s7-1 9-9M6 22c4-6 14-6 18 0" stroke="#333" strokeWidth="2.500" fill="none" />
        <circle cx="15" cy="12" r="3" fill="#fff" stroke="#333" strokeWidth="2" />
        <path d="M10 8c3-2 7-2 10 0" stroke="#5aa7cf" strokeWidth="2" fill="none" />
      </>
    ),
  },
  {
    name: 'Podcasts',
    icon: (
      <>
        <path d="M17 2C6 1-1 12 3 22" stroke="#8fa3b8" strokeWidth="3" fill="none" />
        <path d="M9 24a11 11 0 118-20" stroke="#7b8ba0" strokeWidth="3" fill="none" />
        <path d="M20 4c8 2 11 12 5 19" stroke="#7059e0" strokeWidth="3" fill="none" />
        <circle cx="15" cy="15" r="6" stroke="#7059e0" strokeWidth="3.500" fill="none" />
        <circle cx="15" cy="15" r="2" fill="#7059e0" />
        <path d="M8 30c0-8 14-8 14 0z" fill="#7059e0" />
      </>
    ),
  },
  {
    name: 'Okta',
    icon: (
      <>
        <path d="M0 0h30v30H0z" fill="#2aa9e0" />
        <circle cx="15" cy="15" r="7" fill="none" stroke="#fff" strokeWidth="5" />
      </>
    ),
  },
  {
    name: 'Upwork',
    icon: (
      <>
        <path d="M0 0h30v30H0z" fill="#5bbc2e" />
        <text x="15" y="20" fontSize="18" fontWeight="700" fill="#fff" textAnchor="middle">Up</text>
      </>
    ),
  },
  {
    name: 'Snipping Tool',
    icon: (
      <>
        <ellipse cx="13" cy="14" rx="12" ry="8" fill="#8a8a8a" transform="rotate(-15 13 14)" />
        <ellipse cx="14" cy="9" rx="11" ry="7" fill="#fff" stroke="#d2382e" transform="rotate(-15 14 9)" />
        <path d="M14 5l4 14M20 6l-8 6" stroke="#b5b5b5" />
        <path d="M18 17c-6 5-4 11-1 11s2-6 1-11c6-1 10 1 10 4s-6 1-10-4" stroke="#147ccb" strokeWidth="2" fill="none" />
      </>
    ),
  },
  {
    name: 'WhatsApp',
    icon: (
      <>
        <path d="M0 0h30v30H0z" fill="#147ccb" />
        <path d="M6 24l2-6a8.500 8.500 0 113 4z" fill="#3ccb5c" stroke="#fff" strokeWidth="1.500" />
        <path d="M12 11c-1 4 4 8 7 7l1-2-3-1-1 1-3-3 1-1-1-3z" fill="#fff" />
      </>
    ),
  },
  {
    name: 'Access',
    icon: (
      <>
        <rect width="30" height="30" rx="3" fill="#c8352c" />
        <path d="M6 6h11c5 0 7 2 7 6v12M24 14H12c-6 0-6 9 0 9h6c4 0 6-2 6-5" stroke="#e8c9a8" strokeWidth="3" fill="none" />
      </>
    ),
  },
  {
    name: 'Mail',
    icon: (
      <>
        <path d="M0 9l15-7 15 7v17H0z" fill="#fff" />
        <path d="M2 10h26l-10 5 8 8-11-6z" fill="#0a0a0a" />
      </>
    ),
  },
  {
    name: 'Dragon Center',
    icon: (
      <>
        <rect width="30" height="30" rx="5" fill="#252525" />
        <path d="M2 14l6-5 9-2-2 3 11 1-2 3c-4-1-8 0-12 0-4 1-7 1-10 0z" fill="#e02a1c" />
        <path d="M3 18c5-3 8-2 12-1 4 1 8-1 10-4-1 5-4 7-9 7-4 0-8-2-13-2zM10 23c6 2 10 1 13-3 0 6-7 9-13 3z" fill="#8e2018" />
        <path d="M20 0h6l4 7-4-2z" fill="#702018" />
      </>
    ),
  },
  {
    name: 'Microsoft Store',
    icon: (
      <>
        <path d="M10 8c0-9 10-9 10 0" stroke="#bdbdbd" strokeWidth="2" fill="none" />
        <path d="M1 7h29v22H1z" fill="#fff" />
        <path d="M9 12h6v6H9z" fill="#e8382c" />
        <path d="M16 12h6v6h-6z" fill="#7fba27" />
        <path d="M9 19h6v6H9z" fill="#1b8ed6" />
        <path d="M16 19h6v6h-6z" fill="#f2b52e" />
      </>
    ),
  },
  {
    name: 'Chrome',
    open: true,
    icon: (
      <>
        <circle cx="15" cy="15" r="14" fill="#f2b52e" />
        <path d="M15 15L3 8a14 14 0 0124 0z" fill="#d8352b" />
        <path d="M15 15L3 8a14 14 0 0011 21z" fill="#23a054" />
        <circle cx="15" cy="15" r="6" fill="#4385f0" stroke="#fff" strokeWidth="1.500" />
      </>
    ),
  },
  {
    name: 'File Explorer',
    open: true,
    icon: (
      <>
        <path d="M1 3h12l2 3h13v20H1z" fill="#ffe08a" />
        <path d="M2 3h11v4H2z" fill="#f0a828" />
        <path d="M6 27V16h18v11h-5v-6h-8v6z" fill="#25a0e0" />
      </>
    ),
  },
  {
    name: 'Edge',
    icon: (
      <path d="M3 14C5 5 10 2 16 2c7 0 11 6 11 14H11c0 7 9 8 14 4v6c-9 5-20 2-20-8 0-4 3-7 7-8-1 1-1 2-1 3h9c0-7-11-8-17 1z" fill="#147ccb" />
    ),
  },
  {
    name: 'Task View',
    icon: (
      <path d="M6 6v5M6 17v7M10 5v3h13V5M11 11h11v8H11zM10 25v-3h13v3M4 14h4" stroke="#f0f0f0" strokeWidth="1.500" fill="none" />
    ),
  },
  {
    name: 'Search',
    icon: (
      <>
        <circle cx="17" cy="12" r="6.500" stroke="#f0f0f0" strokeWidth="1.500" fill="none" />
        <path d="M12.500 17L5 25" stroke="#f0f0f0" strokeWidth="1.500" />
      </>
    ),
  },
  {
    name: 'Start',
    icon: <path d="M5 7l9-1v9H5zM15 6l10-1v10H15zM5 16h9v8l-9-1zM15 16h10v9l-10-1z" fill="#fff" />,
  },
];

function Taskbar() {
  return (
    <footer className="flex h-[50px] shrink-0 items-center bg-[#080808]">
      <div className="ml-[5px] flex h-full items-center border-l border-[#4a4a4a] pl-[25px]">
        <svg width="20" height="21" viewBox="0 0 20 21">
          <path d="M0 0h20v17h-7l-3 3-3-3H0z" fill="#fff" />
          <path d="M4 4.500h12M4 8.500h12M4 12.500h8" stroke="#080808" strokeWidth="1.500" />
        </svg>
        <time className="ml-5 flex w-[70px] flex-col text-center text-[13px] leading-[22px]">
          <span dir="rtl">٠٥:١٩ م</span>
          <span>٢٠١٩/٢٥/٠٥</span>
        </time>
        <span className="ml-6 w-2 text-center text-sm">ع</span>
        <svg width="20" height="18" viewBox="0 0 20 18" fill="none" stroke="#f0f0f0" className="ml-[22px]">
          <path d="M.7 6H3l4-4v14l-4-4H.7zM10 6c1.500 2 1.500 4 0 6" />
          <path d="M13 4c3 3 3 7 0 10M16 2c4 5 4 9 0 14" stroke="#6a6a6a" />
        </svg>
        <svg width="17" height="17" viewBox="0 0 17 17" fill="none" stroke="#f0f0f0" className="ml-3">
          <path d="M1 16C1 8 8 1 16 1M5 16C5 10 10 5 16 5M9 16c0-4 3-7 7-7" />
          <circle cx="14" cy="14" r="1.500" fill="#f0f0f0" />
        </svg>
        <svg width="20" height="12" viewBox="0 0 20 12" className="ml-3">
          <path d="M1 1h16v10H1z" fill="none" stroke="#f0f0f0" strokeWidth="1.500" />
          <path d="M3 3h11v6H3zM18 4h2v4h-2z" fill="#f0f0f0" />
        </svg>
        <svg width="16" height="10" viewBox="0 0 16 10" fill="none" stroke="#f0f0f0" strokeWidth="1.500" className="ml-3">
          <path d="M1 9l7-8 7 8" />
        </svg>
        <svg width="19" height="19" viewBox="0 0 19 19" fill="none" stroke="#f0f0f0" strokeWidth="1.300" className="ml-7">
          <circle cx="13" cy="4" r="3.200" />
          <circle cx="6" cy="10" r="3.200" />
          <path d="M1 18c0-6 10-6 10 0M11 9c4-2 7 0 7 4" />
        </svg>
      </div>
      <div className="ml-auto flex h-full">
        {APPS.map(app => (
          <button
            key={app.name}
            type="button"
            aria-label={app.name}
            className={`relative flex h-full w-[62px] items-center justify-center last:w-[60px] ${app.active ? 'bg-[#3a3a3a]' : ''}`}
          >
            <svg width="30" height="30" viewBox="0 0 30 30">{app.icon}</svg>
            {app.open && <span className={`absolute bottom-0 h-[3px] bg-[#76b9ed] ${app.active ? 'inset-x-0' : 'inset-x-[6px]'}`} />}
          </button>
        ))}
      </div>
    </footer>
  );
}

function Watermark() {
  return (
    <div className="pointer-events-none absolute bottom-[22px] left-[846px] flex w-[230px] flex-col items-center font-bold text-[#a09a9a] opacity-50">
      <span className="font-['DejaVu_Sans',sans-serif] text-[64px] leading-[76px]">مستقل</span>
      <span className="text-[36px] font-semibold leading-[40px]">mostaql.com</span>
    </div>
  );
}

export default function App() {
  return (
    <div className={`relative flex h-screen flex-col overflow-hidden bg-[#252525] text-white ${UI_FONT}`}>
      <header className="relative shrink-0 bg-[#0a0a0a]">
        <Circuit />
        <TitleBar />
        <RibbonTabs />
      </header>
      <Ribbon />
      <FormulaBar />
      <Sheet />
      <SheetTabs />
      <StatusBar />
      <Taskbar />
      <Watermark />
    </div>
  );
}
